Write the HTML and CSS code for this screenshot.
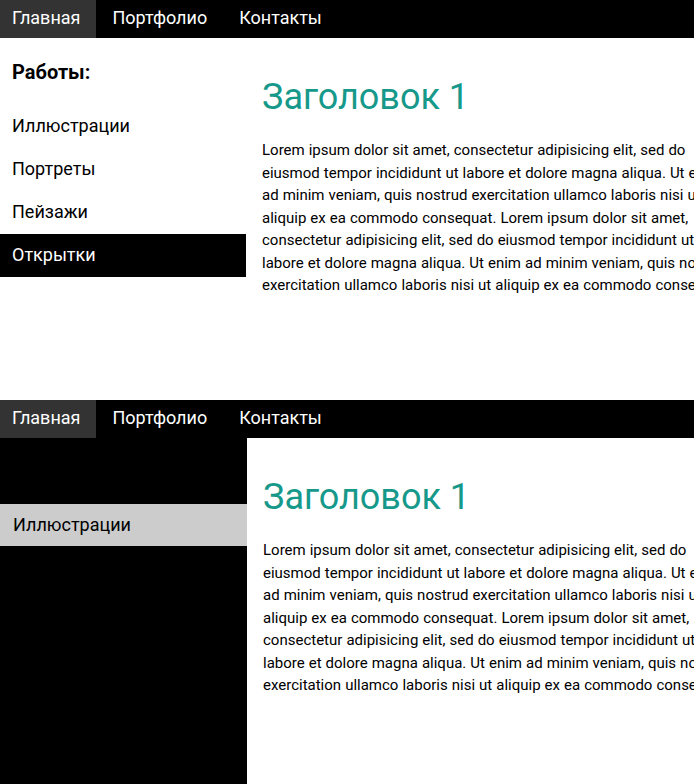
FILE: index.html
```html
<!DOCTYPE html>
<html lang="ru">
<head>
<meta charset="utf-8">
<title>Макет</title>
<link rel="stylesheet" href="styles.css">
</head>
<body>
<div class="frame frame-a">
  <nav class="topnav">
    <a class="nav-item active" href="#">Главная</a>
    <a class="nav-item" href="#">Портфолио</a>
    <a class="nav-item" href="#">Контакты</a>
  </nav>
  <div class="layout">
    <aside class="sidebar">
      <h3 class="side-title">Работы:</h3>
      <ul class="side-list">
        <li class="side-item">Иллюстрации</li>
        <li class="side-item">Портреты</li>
        <li class="side-item">Пейзажи</li>
        <li class="side-item current">Открытки</li>
      </ul>
    </aside>
    <main class="main">
      <h1 class="title">Заголовок 1</h1>
      <p class="text">Lorem ipsum dolor sit amet, consectetur adipisicing elit, sed do eiusmod tempor incididunt ut labore et dolore magna aliqua. Ut enim ad minim veniam, quis nostrud exercitation ullamco laboris nisi ut aliquip ex ea commodo consequat. Lorem ipsum dolor sit amet, consectetur adipisicing elit, sed do eiusmod tempor incididunt ut labore et dolore magna aliqua. Ut enim ad minim veniam, quis nostrud exercitation ullamco laboris nisi ut aliquip ex ea commodo consequat.</p>
    </main>
  </div>
</div>
<div class="frame frame-b">
  <nav class="topnav">
    <a class="nav-item active" href="#">Главная</a>
    <a class="nav-item" href="#">Портфолио</a>
    <a class="nav-item" href="#">Контакты</a>
  </nav>
  <div class="layout">
    <aside class="sidebar dark">
      <h3 class="side-title">Работы:</h3>
      <ul class="side-list">
        <li class="side-item hover">Иллюстрации</li>
        <li class="side-item">Портреты</li>
        <li class="side-item">Пейзажи</li>
        <li class="side-item">Открытки</li>
      </ul>
    </aside>
    <main class="main">
      <h1 class="title">Заголовок 1</h1>
      <p class="text">Lorem ipsum dolor sit amet, consectetur adipisicing elit, sed do eiusmod tempor incididunt ut labore et dolore magna aliqua. Ut enim ad minim veniam, quis nostrud exercitation ullamco laboris nisi ut aliquip ex ea commodo consequat. Lorem ipsum dolor sit amet, consectetur adipisicing elit, sed do eiusmod tempor incididunt ut labore et dolore magna aliqua. Ut enim ad minim veniam, quis nostrud exercitation ullamco laboris nisi ut aliquip ex ea commodo consequat.</p>
    </main>
  </div>
</div>
</body>
</html>
```
FILE: styles.css
```css
html, body {
  margin: 0;
  padding: 0;
  background: #fff;
  overflow: hidden;
}
body {
  font-family: Roboto, "Liberation Sans", sans-serif;
  color: #000;
  width: 694px;
  height: 784px;
}
.frame {
  height: 400px;
  overflow: hidden;
  display: flex;
  flex-direction: column;
}
.frame-b {
  height: 384px;
}
.topnav {
  display: flex;
  height: 38px;
  background: #000;
  flex: none;
}
.nav-item {
  display: block;
  padding: 0 16px;
  line-height: 35px;
  height: 38px;
  font-size: 18px;
  color: #fff;
  text-decoration: none;
}
.nav-item:first-child {
  padding-left: 12px;
}
.nav-item.active {
  background: #333;
}
.layout {
  display: flex;
  flex: 1;
  min-height: 0;
}
.sidebar {
  width: 246px;
  flex: none;
  background: #fff;
}
.sidebar.dark {
  background: #000;
  width: 247px;
}
.side-title {
  margin: 22px 0 21px;
  padding-left: 12px;
  font-size: 20px;
  line-height: 24px;
  font-weight: 700;
}
.side-list {
  list-style: none;
  margin: 0;
  padding: 0;
}
.side-item {
  height: 43px;
  line-height: 41px;
  padding-left: 12px;
  font-size: 18px;
}
.side-item.current {
  background: #000;
  color: #fff;
}
.sidebar.dark .side-item {
  color: #000;
}
.sidebar.dark .side-item.hover {
  background: #ccc;
  height: 42px;
  margin-top: -1px;
  padding-left: 13px;
}
.main {
  flex: none;
  width: 476px;
  padding: 0 16px;
  background: #fff;
}
.title {
  margin: 38px 0 21px;
  font-size: 36px;
  line-height: 42px;
  font-weight: 400;
  color: #16998a;
}
.text {
  margin: 0;
  font-size: 15px;
  line-height: 22.5px;
  word-spacing: 0.3px;
}
```
